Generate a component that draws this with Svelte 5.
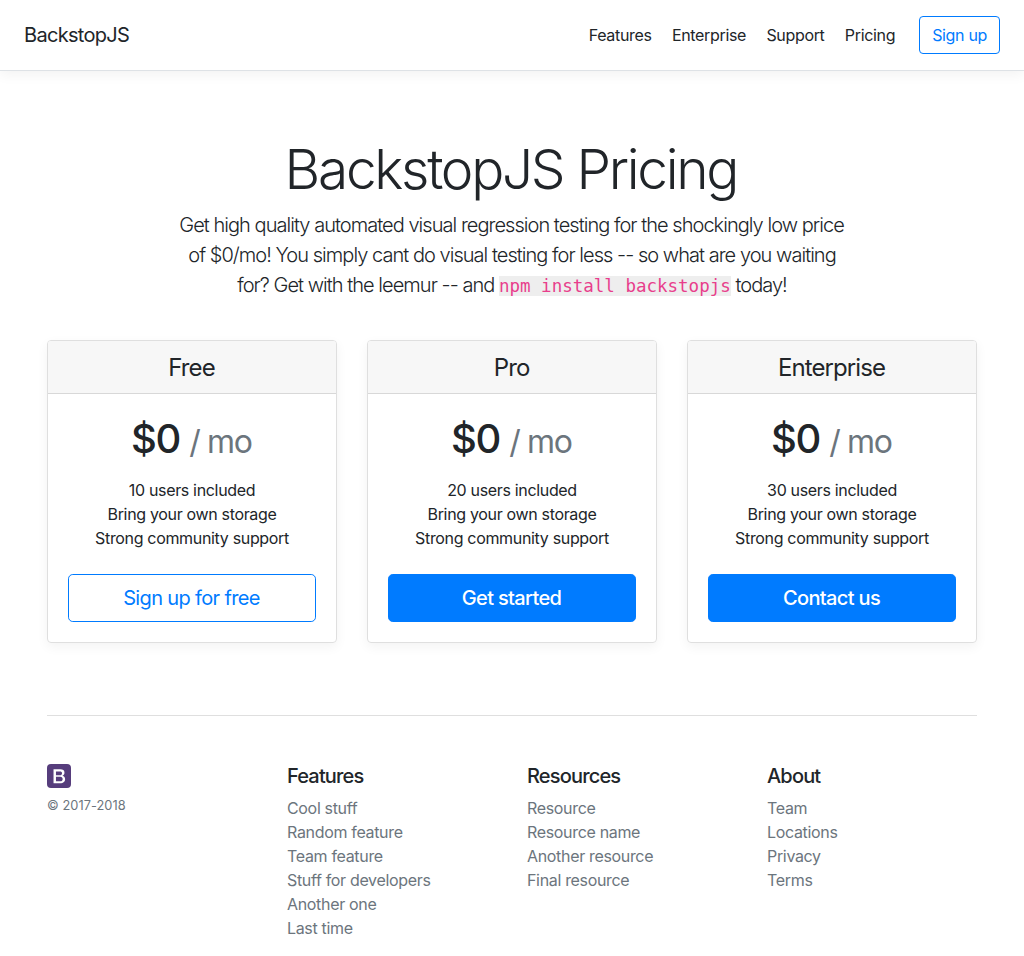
<script>
  const nav = ['Features', 'Enterprise', 'Support', 'Pricing'];
  const plans = [
    { name: 'Free', users: 10, action: 'Sign up for free', outline: true },
    { name: 'Pro', users: 20, action: 'Get started', outline: false },
    { name: 'Enterprise', users: 30, action: 'Contact us', outline: false }
  ];
  const groups = [
    { title: 'Features', links: ['Cool stuff', 'Random feature', 'Team feature', 'Stuff for developers', 'Another one', 'Last time'] },
    { title: 'Resources', links: ['Resource', 'Resource name', 'Another resource', 'Final resource'] },
    { title: 'About', links: ['Team', 'Locations', 'Privacy', 'Terms'] }
  ];
</script>

<header class="topbar">
  <h5 class="brand">BackstopJS</h5>
  <nav>
    {#each nav as item}<a href="#top">{item}</a>{/each}
  </nav>
  <a class="btn outline" href="#top">Sign up</a>
</header>

<section class="hero">
  <h1>BackstopJS Pricing</h1>
  <p>
    Get high quality automated visual regression testing for the shockingly low price<br />
    of $0/mo! You simply cant do visual testing for less -- so what are you waiting<br />
    for? Get with the leemur -- and <code>npm install backstopjs</code> today!
  </p>
</section>

<main class="container">
  <div class="deck">
    {#each plans as plan}
      <article class="card">
        <h4>{plan.name}</h4>
        <div class="body">
          <div class="price">$0 <small>/ mo</small></div>
          <ul>
            <li>{plan.users} users included</li>
            <li>Bring your own storage</li>
            <li>Strong community support</li>
          </ul>
          <button class="btn large" class:outline={plan.outline}>{plan.action}</button>
        </div>
      </article>
    {/each}
  </div>

  <footer>
    <div>
      <svg class="logo" width="24" height="24" viewBox="0 0 612 612">
        <path fill="#563d7c" d="M510 0a102 102 0 0 1 102 102v408a102 102 0 0 1-102 102H102A102 102 0 0 1 0 510V102A102 102 0 0 1 102 0z" />
        <path fill="#fff" d="M166.3 133h173.5c32 0 57.7 7.3 77 22 19.300 14.700 29 36.800 29 66.500 0 18-4.400 33.400-13.200 46.200-8.800 12.800-21.400 22.800-37.800 29.800v1c22 4.700 38.700 15.100 50 31.200 11.300 16.200 17 36.400 17 60.800 0 14-2.500 27.200-7.500 39.200-5 12-12.800 22.500-23.500 31.200-10.700 8.800-24.300 15.800-41 21s-36.500 7.800-59.500 7.800h-164zm62.500 155.500h102c15 0 27.500-4.200 37.500-12.700 10-8.500 15-20.800 15-36.800 0-18-4.500-30.700-13.500-38s-22-11-39-11h-102zm0 150.500h110.500c19 0 33.800-4.900 44.200-14.700 10.500-9.800 15.800-23.700 15.800-41.700 0-17.700-5.200-31.200-15.800-40.700C373 332.300 358.300 327.500 339.300 327.500H228.800z" />
      </svg>
      <small class="copy">© 2017-2018</small>
    </div>
    {#each groups as group}
      <div>
        <h5>{group.title}</h5>
        <ul>
          {#each group.links as link}<li><a href="#top">{link}</a></li>{/each}
        </ul>
      </div>
    {/each}
  </footer>
</main>

<style>
  :global(html) { font-size: 16px; }
  :global(body) {
    margin: 0;
    overflow: hidden;
    background: #fff;
    color: #212529;
    font: 420 16px/1.5 Inter, sans-serif;
    letter-spacing: -0.33px;
  }
  * { box-sizing: border-box; }
  a { color: inherit; text-decoration: none; }
  ul { list-style: none; margin: 0; padding: 0; }
  h1, h4, h5, p { margin: 0; }
  .topbar {
    display: flex;
    align-items: center;
    height: 71px;
    padding: 0 24px;
    border-bottom: 1px solid #dee2e6;
    box-shadow: 0 4px 12px rgba(0, 0, 0, 0.05);
  }
  .brand { margin-right: auto; font-size: 20px; font-weight: 420; line-height: 24px; letter-spacing: -0.7px; }
  nav { display: flex; gap: 20.3px; margin-right: 24px; }
  .btn {
    display: block;
    border: 1px solid #007bff;
    border-radius: 4px;
    padding: 6px 12px;
    background: #007bff;
    color: #fff;
    font: inherit;
    letter-spacing: inherit;
    text-align: center;
  }
  .btn.outline { background: #fff; color: #007bff; }
  .hero { padding: 65px 0 40px; text-align: center; }
  h1 { font-size: 55px; font-weight: 300; line-height: 67px; margin-bottom: 7px; letter-spacing: -2.3px; text-indent: -2.3px; }
  .hero p { font-size: 20px; font-weight: 350; line-height: 30px; white-space: nowrap; letter-spacing: -0.96px; text-indent: -1px; }
  code { font: 17.5px "DejaVu Sans Mono", monospace; color: #e83e8c; background: #eee; letter-spacing: 0; }
  .container { width: 930px; margin-left: 47px; }
  .deck { display: grid; grid-template-columns: repeat(3, 290px); gap: 30px; }
  .card {
    height: 303px;
    border: 1px solid #dfdfdf;
    border-radius: 4px;
    box-shadow: 0 4px 12px rgba(0, 0, 0, 0.05);
    text-align: center;
  }
  .card h4 {
    height: 53px;
    padding-top: 12px;
    border-bottom: 1px solid #d8d8d8;
    border-radius: 3px 3px 0 0;
    background: #f7f7f7;
    font-size: 24px;
    font-weight: 420;
    line-height: 29px;
    letter-spacing: -0.9px;
    text-indent: -0.9px;
  }
  .body { padding: 21px 20px 20px; }
  .price { font-size: 40px; font-weight: 500; line-height: 48px; white-space: nowrap; letter-spacing: -1.35px; text-indent: -1.5px; }
  .price small { font-size: 32px; font-weight: 400; color: #6c757d; }
  .body ul { margin: 12px 0 24px; }
  .large { width: 100%; height: 48px; padding: 0; font-size: 20px; font-weight: 500; line-height: 30px; border-radius: 4.8px; letter-spacing: -0.65px; text-indent: -1px; }
  .large.outline { font-weight: 420; letter-spacing: -0.64px; }
  footer {
    display: grid;
    grid-template-columns: repeat(4, 240px);
    margin-top: 72px;
    padding-top: 48px;
    border-top: 1px solid #dfdfdf;
  }
  .logo { display: block; margin-bottom: 8px; }
  .copy { display: block; font-size: 12.8px; line-height: 19px; color: #6c757d; letter-spacing: 0.06px; }
  footer h5 { margin-bottom: 8px; font-size: 20px; font-weight: 500; line-height: 24px; letter-spacing: -0.83px; }
  footer li { color: #6c757d; }
</style>
